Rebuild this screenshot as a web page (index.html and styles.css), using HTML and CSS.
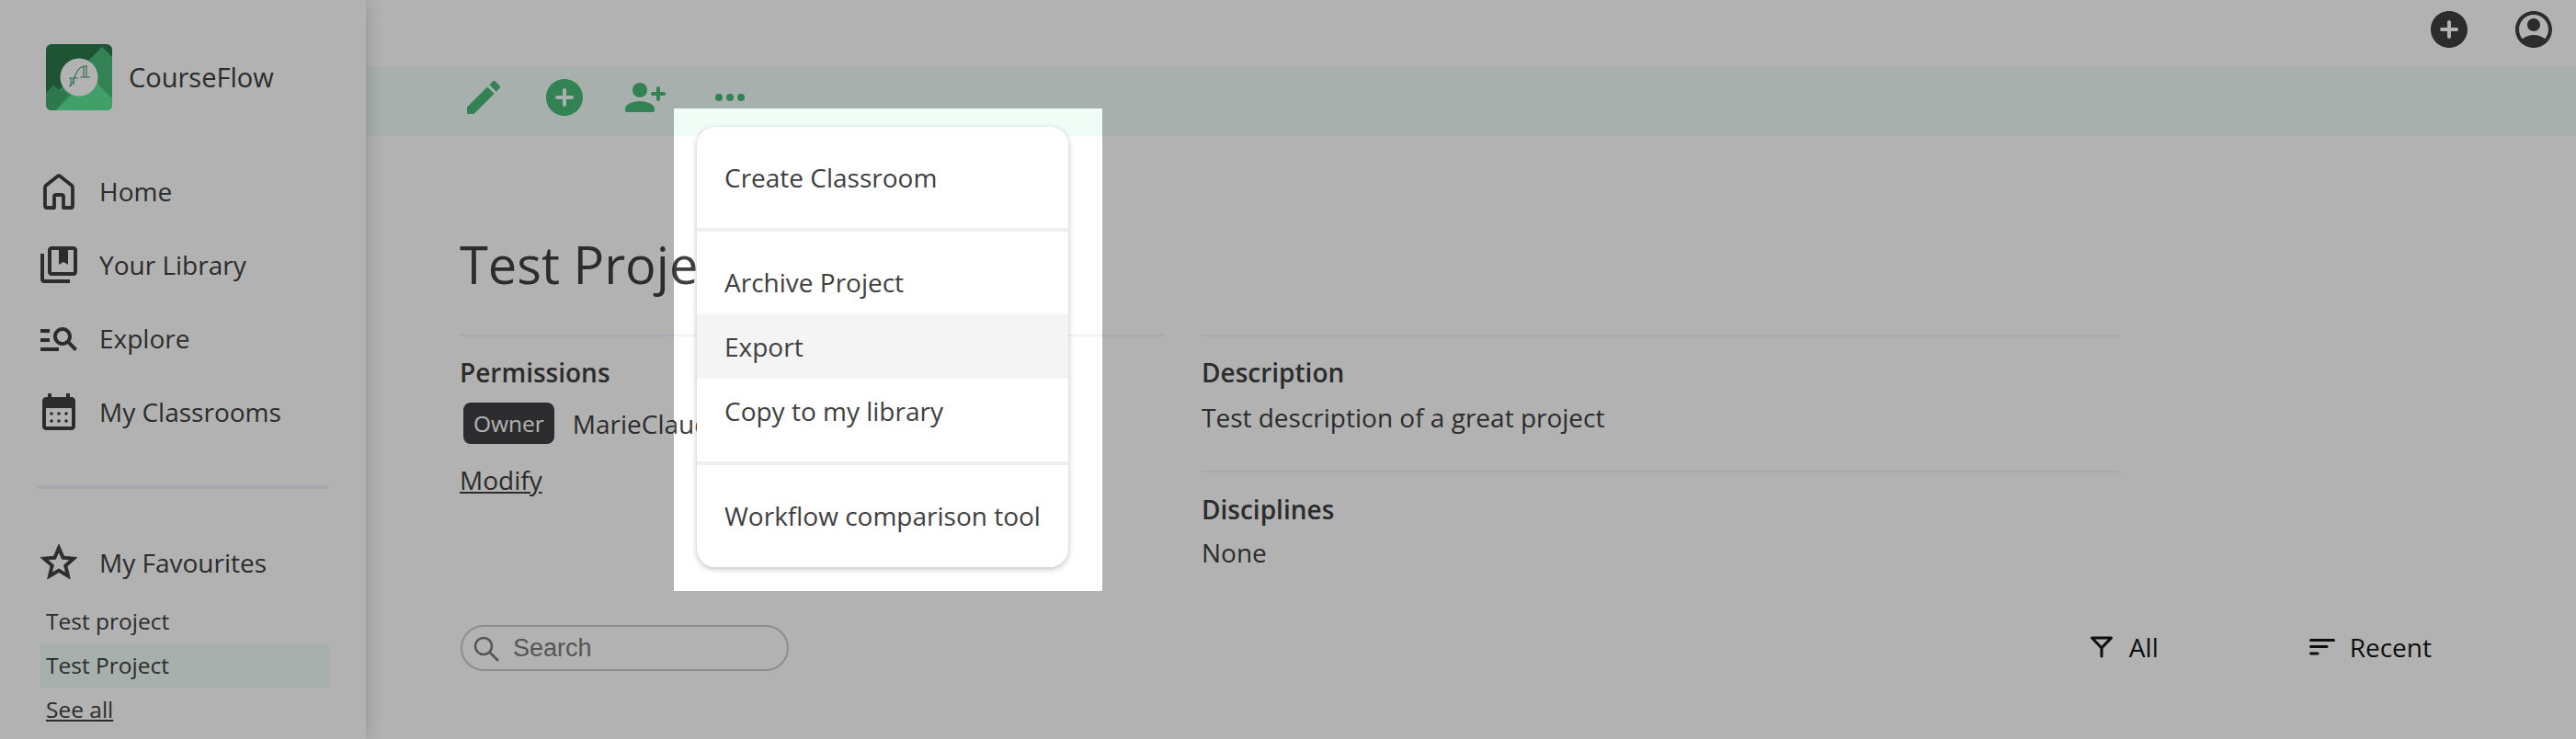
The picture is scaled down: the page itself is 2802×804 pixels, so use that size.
FILE: index.html
```html
<!DOCTYPE html>
<html lang="en">
<head>
    <meta charset="UTF-8">
    <title>CourseFlow</title>
    <link rel="stylesheet" href="styles.css">
</head>
<body>
    <div class="app">
        <aside class="sidebar">
            <div class="brand">
                <svg class="logo" viewBox="0 0 72 72">
                    <rect width="72" height="72" fill="#2b784a"/>
                    <polygon points="61,3 72,14 72,72 11,72 14,50" fill="#4aba78"/>
                    <polygon points="11,72 50,32 57,44 72,59 72,72" fill="#5ee496"/>
                    <polygon points="0,53 8,45 17,52 24,54 11,72 0,72" fill="#44ab6f"/>
                    <circle cx="36" cy="36" r="20.5" fill="#fff"/>
                    <path d="M25 46C31 44 31 30 37 26C40 24 41 24 45 24" fill="none" stroke="#2b784a" stroke-width="1"/>
                    <path d="M25 37H35M27 37V46M30 37V44M37 36H48M41 25V36M44 24V36" fill="none" stroke="#4aa074" stroke-width="1.2"/>
                </svg>
                <span class="brand-name">CourseFlow</span>
            </div>

            <nav class="nav">
                <a class="nav-item">
                    <svg class="icon" viewBox="0 0 48 48"><path d="M19 42H11a2 2 0 0 1-2-2V20a3 3 0 0 1 1-2.300L22.300 8a2.600 2.600 0 0 1 3.400 0L38 17.700a3 3 0 0 1 1 2.300V40a2 2 0 0 1-2 2H29V30a2 2 0 0 0-2-2H21a2 2 0 0 0-2 2Z" fill="none" stroke="currentColor" stroke-width="3.800" stroke-linejoin="round"/></svg>
                    Home
                </a>
                <a class="nav-item">
                    <svg class="icon" viewBox="0 0 24 24"><path d="M4 6H2v14c0 1.100.9 2 2 2h14v-2H4V6zm16-4H8c-1.100 0-2 .9-2 2v12c0 1.100.9 2 2 2h12c1.100 0 2-.9 2-2V4c0-1.100-.9-2-2-2zm0 14H8V4h4v8l2.500-1.500L17 12V4h3v12z"/></svg>
                    Your Library
                </a>
                <a class="nav-item">
                    <svg class="icon" viewBox="0 0 24 24"><path d="M7 9H2V7h5v2zm0 3H2v2h5v-2zm13.590 7-3.830-3.830c-.8.520-1.740.830-2.760.830-2.760 0-5-2.240-5-5s2.240-5 5-5 5 2.240 5 5c0 1.020-.31 1.960-.83 2.750L22 17.590 20.590 19zM17 11c0-1.650-1.350-3-3-3s-3 1.350-3 3 1.350 3 3 3 3-1.350 3-3zM2 19h10v-2H2v2z"/></svg>
                    Explore
                </a>
                <a class="nav-item">
                    <svg class="icon" viewBox="0 0 24 24"><path d="M19 4h-1V2h-2v2H8V2H6v2H5c-1.110 0-1.990.9-1.990 2L3 20c0 1.100.89 2 2 2h14c1.100 0 2-.9 2-2V6c0-1.100-.9-2-2-2zm0 16H5V10h14v10z"/><circle cx="8" cy="13" r=".9"/><circle cx="12" cy="13" r=".9"/><circle cx="16" cy="13" r=".9"/><circle cx="8" cy="17" r=".9"/><circle cx="12" cy="17" r=".9"/><circle cx="16" cy="17" r=".9"/></svg>
                    My Classrooms
                </a>
            </nav>

            <hr class="side-rule">

            <a class="nav-item">
                <svg class="icon icon-star" viewBox="0 0 24 24"><path d="M22 9.240l-7.190-.62L12 2 9.190 8.630 2 9.240l5.460 4.730L5.820 21 12 17.270 18.180 21l-1.630-7.030L22 9.240zM12 15.400l-3.760 2.270 1-4.280-3.320-2.880 4.380-.38L12 6.100l1.710 4.040 4.380.38-3.320 2.880 1 4.280L12 15.400z"/></svg>
                My Favourites
            </a>
            <div class="fav-list">
                <a class="fav">Test project</a>
                <a class="fav fav-active">Test Project</a>
                <a class="fav"><u>See all</u></a>
            </div>
        </aside>

        <main class="main">
            <div class="topbar">
                <svg class="icon" viewBox="0 0 24 24"><path d="M12 2C6.480 2 2 6.480 2 12s4.480 10 10 10 10-4.480 10-10S17.520 2 12 2zm4 11h-3v3c0 .55-.45 1-1 1s-1-.45-1-1v-3H8c-.55 0-1-.45-1-1s.45-1 1-1h3V8c0-.55.45-1 1-1s1 .45 1 1v3h3c.55 0 1 .45 1 1s-.45 1-1 1z"/></svg>
                <svg class="icon" viewBox="0 0 24 24"><path fill-rule="evenodd" d="M12 2C6.470 2 2 6.470 2 12s4.470 10 10 10 10-4.470 10-10S17.530 2 12 2zm0 2c4.420 0 8 3.580 8 8 0 1.950-.7 3.730-1.860 5.120C16.450 15.800 14.320 15 12 15s-4.450.8-6.140 2.120C4.700 15.730 4 13.950 4 12c0-4.420 3.580-8 8-8zm0 9c1.930 0 3.500-1.570 3.500-3.500S13.930 6 12 6 8.500 7.570 8.500 9.500 10.070 13 12 13z"/></svg>
            </div>

            <div class="actionbar">
                <svg class="icon" viewBox="0 0 24 24"><path d="M3 17.460v3.040c0 .28.22.5.5.5h3.040c.13 0 .26-.05.35-.15L17.810 9.940l-3.750-3.750L3.150 17.100c-.1.1-.15.22-.15.36zM20.710 7.040c.39-.39.39-1.020 0-1.410l-2.340-2.340a.9959.9959 0 0 0-1.410 0l-1.830 1.830 3.750 3.750 1.830-1.830z"/></svg>
                <svg class="icon" viewBox="0 0 24 24"><path d="M12 2C6.480 2 2 6.480 2 12s4.480 10 10 10 10-4.480 10-10S17.520 2 12 2zm4 11h-3v3c0 .55-.45 1-1 1s-1-.45-1-1v-3H8c-.55 0-1-.45-1-1s.45-1 1-1h3V8c0-.55.45-1 1-1s1 .45 1 1v3h3c.55 0 1 .45 1 1s-.45 1-1 1z"/></svg>
                <svg class="icon" viewBox="0 0 24 24"><path d="M9 12c2.210 0 4-1.790 4-4s-1.790-4-4-4-4 1.790-4 4 1.790 4 4 4zm0 2c-2.670 0-8 1.340-8 4v1c0 .55.45 1 1 1h14c.55 0 1-.45 1-1v-1c0-2.660-5.330-4-8-4z"/><path d="M20 9V7c0-.55-.45-1-1-1s-1 .45-1 1v2h-2c-.55 0-1 .45-1 1s.45 1 1 1h2v2c0 .55.45 1 1 1s1-.45 1-1v-2h2c.55 0 1-.45 1-1s-.45-1-1-1h-2z"/></svg>
                <svg class="icon icon-more" viewBox="0 0 24 24"><circle cx="6" cy="12" r="2"/><circle cx="12" cy="12" r="2"/><circle cx="18" cy="12" r="2"/></svg>
            </div>

            <div class="content">
                <h1 class="title">Test Project</h1>

                <div class="details">
                    <section class="details-left">
                        <h3 class="label">Permissions</h3>
                        <div class="owner-row">
                            <span class="pill">Owner</span>
                            <span>MarieClaude</span>
                        </div>
                        <a class="modify">Modify</a>
                    </section>
                    <section class="details-right">
                        <h3 class="label">Description</h3>
                        <p class="value">Test description of a great project</p>
                        <hr class="rule">
                        <h3 class="label">Disciplines</h3>
                        <p class="value value-last">None</p>
                    </section>
                </div>

                <div class="toolbar">
                    <div class="search">
                        <svg class="search-icon" viewBox="0 0 28 28"><circle cx="11" cy="11" r="9" fill="none" stroke="currentColor" stroke-width="2.600"/><path d="M17.500 17.500L27 27" stroke="currentColor" stroke-width="2.600" fill="none"/></svg>
                        <span>Search</span>
                    </div>
                    <div class="filters">
                        <span class="filter">
                            <svg class="filter-icon" viewBox="0 0 24 24"><path d="M1.500 2H22.500L12 13ZM12 13V22" fill="none" stroke="currentColor" stroke-width="3" stroke-linecap="round" stroke-linejoin="round"/></svg>
                            All
                        </span>
                        <span class="filter filter-sort">
                            <svg class="sort-icon" viewBox="0 0 28 20"><path d="M1.500 2.500H26.500M1.500 9.500H19M1.500 17H9" fill="none" stroke="currentColor" stroke-width="3" stroke-linecap="round"/></svg>
                            Recent
                        </span>
                    </div>
                </div>
            </div>
        </main>
    </div>

    <!-- dimmed backdrop, the hole is the spot around the open menu -->
    <div class="spotlight"></div>

    <div class="menu">
        <div class="menu-group">
            <div class="menu-item">Create Classroom</div>
        </div>
        <div class="menu-group">
            <div class="menu-item">Archive Project</div>
            <div class="menu-item menu-item-hover">Export</div>
            <div class="menu-item">Copy to my library</div>
        </div>
        <div class="menu-group">
            <div class="menu-item">Workflow comparison tool</div>
        </div>
    </div>
</body>
</html>
```

FILE: styles.css
```css
* {
    box-sizing: border-box;
}

html,
body {
    height: 100%;
}

body {
    margin: 0;
    overflow: hidden;
    background-color: #fff;
    color: #404040;
    font-family: "Open Sans", sans-serif;
    font-size: 28px;
    line-height: 38px;
}

.app {
    display: flex;
    height: 804px;
}

.icon {
    display: block;
    flex: none;
    width: 48px;
    height: 48px;
    fill: currentColor;
}

.icon-star {
    stroke: currentColor;
    stroke-width: 0.4;
    stroke-linejoin: round;
}

/* Sidebar */
.sidebar {
    flex: none;
    width: 398px;
    padding: 48px 40px 0;
    background-color: #fff;
    box-shadow: 0 0 20px rgba(0, 0, 0, 0.2);
    position: relative;
    z-index: 1;
}

.brand {
    display: flex;
    align-items: center;
    gap: 18px;
    padding-left: 10px;
    height: 72px;
}

.brand-name {
    font-size: 29px;
}

.logo {
    width: 72px;
    height: 72px;
    border-radius: 6px;
}

.nav {
    margin-top: 48px;
}

.nav-item {
    display: flex;
    align-items: center;
    gap: 20px;
    height: 80px;
}

.side-rule {
    height: 4px;
    margin: 40px 0 40px;
    border: none;
    background-color: #f0f0f8;
}

.fav {
    display: block;
    height: 48px;
    margin-left: 4px;
    padding-left: 6px;
    font-size: 24.5px;
    line-height: 48px;
}

.fav-active {
    background-color: #f0fdf6;
}

/* Main column */
.main {
    flex: 1;
    min-width: 0;
}

.topbar {
    display: flex;
    justify-content: flex-end;
    gap: 44px;
    height: 72px;
    padding: 8px 22px 0 0;
}

.actionbar {
    display: flex;
    gap: 40px;
    height: 76px;
    padding: 10px 0 0 104px;
    background-color: #f0fdf6;
    color: #4aba78;
}

.icon-more {
    margin-left: 4px;
}

.content {
    width: 2300px;
    padding: 101px 0 0 102px;
}

.title {
    margin: 0;
    font-size: 56px;
    font-weight: 400;
    line-height: 76px;
}

.details {
    display: grid;
    grid-template-columns: 767px 999px;
    gap: 40px;
    margin-top: 39px;
}

.details-left,
.details-right {
    padding-top: 20px;
    border-top: 2px solid #f0f0f8;
}

.label {
    margin: 0;
    font-size: 28px;
    font-weight: 600;
    line-height: 38px;
}

.value {
    margin: 11px 0 0;
}

.value-last {
    margin-top: 9px;
}

.rule {
    height: 2px;
    margin: 39px 0 21px;
    border: none;
    background-color: #f0f0f8;
}

.owner-row {
    display: flex;
    align-items: center;
    gap: 20px;
    margin: 14px 0 0 4px;
}

.pill {
    padding: 0 11px;
    height: 45px;
    border-radius: 8px;
    background-color: #3f4043;
    color: #fff;
    font-size: 24.5px;
    line-height: 45px;
}

.modify {
    display: block;
    margin-top: 20px;
    text-decoration: underline;
}

/* Search and filters */
.toolbar {
    display: flex;
    justify-content: space-between;
    align-items: center;
    margin-top: 60px;
    width: 2145px;
}

.search {
    display: flex;
    align-items: center;
    gap: 15px;
    width: 357px;
    height: 50px;
    margin-left: 1px;
    padding-left: 12px;
    border: 2px solid #cbcbcb;
    border-radius: 25px;
    color: #7a7a7a;
    font-family: "Liberation Sans", sans-serif;
    font-size: 27px;
}

.search-icon {
    width: 28px;
    height: 28px;
    margin-top: 2px;
}

.filters {
    display: flex;
    gap: 164px;
    margin-bottom: 3px;
    color: #151515;
}

.filter {
    display: flex;
    align-items: center;
    gap: 18px;
}

.filter-sort {
    gap: 16px;
}

.filter-icon {
    width: 24px;
    height: 24px;
}

.sort-icon {
    width: 28px;
    height: 20px;
}

/* Spot around the open menu, everything else gets dimmed */
.spotlight {
    position: absolute;
    top: 118px;
    left: 733px;
    width: 466px;
    height: 525px;
    box-shadow: 0 0 0 3000px rgba(0, 0, 0, 0.3);
    z-index: 2;
}

.menu {
    position: absolute;
    top: 138px;
    left: 758px;
    width: 404px;
    height: 479px;
    border-radius: 20px;
    background-color: #fff;
    box-shadow: 0 2px 6px rgba(0, 0, 0, 0.25);
    z-index: 3;
}

.menu-group {
    padding: 20px 0;
    border-bottom: 4px solid #eeeef3;
}

.menu-group:last-child {
    border-bottom: none;
}

.menu-item {
    height: 70px;
    padding-left: 30px;
    line-height: 70px;
    white-space: nowrap;
}

.menu-item-hover {
    background-color: #f4f4f4;
}
```
